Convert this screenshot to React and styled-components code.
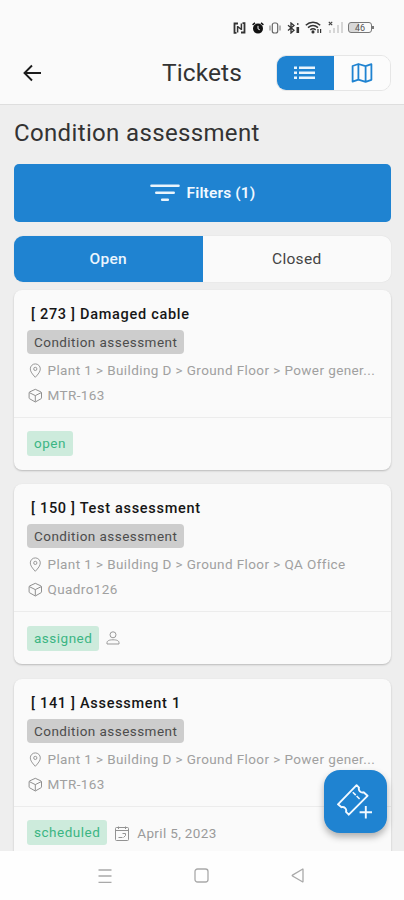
import styled, { createGlobalStyle, css } from "styled-components";

const tickets = [
  {
    id: 273,
    name: "Damaged cable",
    path: "Plant 1 > Building D > Ground Floor > Power gener...",
    asset: "MTR-163",
    status: "open",
  },
  {
    id: 150,
    name: "Test assessment",
    path: "Plant 1 > Building D > Ground Floor > QA Office",
    asset: "Quadro126",
    status: "assigned",
    assigned: true,
  },
  {
    id: 141,
    name: "Assessment 1",
    path: "Plant 1 > Building D > Ground Floor > Power gener...",
    asset: "MTR-163",
    status: "scheduled",
    date: "April 5, 2023",
  },
];

export default function App() {
  return (
    <Screen>
      <GlobalStyle />
      <StatusBar />
      <Header>
        <BackButton aria-label="Back">
          <BackIcon />
        </BackButton>
        <Title>Tickets</Title>
        <ViewSwitch>
          <ViewButton $active aria-label="List">
            <ListIcon />
          </ViewButton>
          <ViewButton aria-label="Map">
            <MapIcon />
          </ViewButton>
        </ViewSwitch>
      </Header>
      <Content>
        <Heading>Condition assessment</Heading>
        <FilterButton>
          <FilterIcon />
          Filters (1)
        </FilterButton>
        <Tabs>
          <Tab $active>Open</Tab>
          <Tab>Closed</Tab>
        </Tabs>
        <TicketList>
          {tickets.map((ticket) => (
            <TicketCard key={ticket.id} ticket={ticket} />
          ))}
        </TicketList>
      </Content>
      <AddButton aria-label="New ticket">
        <TicketPlusIcon />
      </AddButton>
      <NavBar />
    </Screen>
  );
}

const TicketCard = ({ ticket }) => {
  return (
    <Card>
      <CardBody>
        <CardTitle>
          <span>[ {ticket.id} ]</span> {ticket.name}
        </CardTitle>
        <Category>Condition assessment</Category>
        <Meta>
          <PinIcon />
          <span>{ticket.path}</span>
        </Meta>
        <Meta>
          <BoxIcon />
          <span>{ticket.asset}</span>
        </Meta>
      </CardBody>
      <CardFooter>
        <Status>{ticket.status}</Status>
        {ticket.assigned && <PersonIcon />}
        {ticket.date && (
          <DateLabel>
            <CalendarIcon />
            {ticket.date}
          </DateLabel>
        )}
      </CardFooter>
    </Card>
  );
};

const StatusBar = () => (
  <StatusRow>
    {/* nfc */}
    <svg width="13" height="12" viewBox="0 0 13 12" fill="none" stroke="#333" strokeWidth="1.8">
      <path d="M5 1.5H1.5v9.300H3.500M8 10.500h3.500V1.200H9.500" />
      <path d="M4.600 4v6.500M8.400 1.500v6.500M4.600 4.500l3.800 3" strokeWidth="1.500" />
    </svg>
    {/* alarm */}
    <svg width="12" height="12" viewBox="0 0 12 12">
      <circle cx="6" cy="6.6" r="5" fill="#111" />
      <path d="M.6 2.8 3 .8M11.4 2.8 9 .8" stroke="#111" strokeWidth="1.5" />
      <path d="M6 3.8v3l1.8 1" stroke="#fafafa" strokeWidth="1" fill="none" />
    </svg>
    {/* vibrate */}
    <svg width="12" height="12" viewBox="0 0 12 12" fill="none" stroke="#666">
      <rect x="3.3" y="1" width="5.4" height="10" rx="2" strokeWidth="1.2" />
      <path d="M1 3.5v5M11 3.5v5" strokeWidth=".9" />
    </svg>
    {/* bluetooth */}
    <svg width="13" height="12" viewBox="0 0 13 12" fill="none" stroke="#333">
      <path d="m1 3.3 6 5-3 2.7V1l3 2.6-6 5" strokeWidth="1.3" />
      <path d="M10.8 5v6" strokeWidth="2.6" />
      <path d="M10.8 1v2" strokeWidth="1.2" />
    </svg>
    {/* wifi */}
    <svg width="17" height="13" viewBox="0 0 17 13" fill="none" stroke="#333" strokeWidth="1.5">
      <path d="M.8 4.2C5 .2 11 .2 15.2 4.2M3 6.6c3-2.6 7-2.6 10 0M5.3 8.8c1.7-1.4 3.7-1.4 5.4 0" />
      <circle cx="8" cy="10.9" r=".8" fill="#333" />
      <path d="M13 8v4M15.6 8v4" strokeWidth="1.2" />
    </svg>
    {/* signal */}
    <svg width="16" height="13" viewBox="0 0 16 13" fill="none" stroke="#d2d2d2" strokeWidth="1.8">
      <path d="M2 12V9M6 12V7M10 12V4M14 12V1" />
      <path d="m.8.8 3.4 3.4M4.2.8.8 4.2" stroke="#444" strokeWidth="1.2" />
    </svg>
    <Battery>46</Battery>
  </StatusRow>
);

const NavBar = () => (
  <Nav>
    <svg width="14" height="16" viewBox="0 0 14 16" stroke="#a9a9a9" strokeWidth="1.3">
      <path d="M.5 2h13M.5 8h13M.5 14.3h13" />
    </svg>
    <svg width="15" height="15" viewBox="0 0 15 15" fill="none" stroke="#a9a9a9" strokeWidth="1.3">
      <rect x="1" y="1" width="13" height="13" rx="2.5" />
    </svg>
    <svg width="14" height="15" viewBox="0 0 14 15" fill="none" stroke="#a9a9a9" strokeWidth="1.3">
      <path d="M12 1.5v12q0 .6-.6.3L1.5 8q-.6-.5 0-.9L11.4 1.2q.6-.3.6.3z" />
    </svg>
  </Nav>
);

const BackIcon = () => (
  <svg width="20" height="18" viewBox="0 0 20 18" fill="none" stroke="#1c1c1c" strokeWidth="1.9">
    <path d="M19 9H2.5M10 1.5 2.5 9l7.5 7.5" />
  </svg>
);

const ListIcon = () => (
  <svg width="22" height="14" viewBox="0 0 22 14" fill="#e9f4fc">
    <path d="M0 .5h3v2.6H0zM5 .5h16v2.6H5zM0 5.5h3v2.6H0zM5 5.5h16v2.6H5zM0 10.5h3v2.6H0zM5 10.5h16v2.6H5z" />
  </svg>
);

const MapIcon = () => (
  <svg width="22" height="20" viewBox="0 0 22 20" fill="none" stroke="#1f83d1" strokeWidth="1.8" strokeLinejoin="round">
    <path d="m1.6 3 5.8-2 7.2 2.2 5.8-2v15.6l-5.8 2-7.2-2.2-5.8 2zM7.4 1v15.6M14.6 3.2v15.6" />
  </svg>
);

const FilterIcon = () => (
  <svg width="30" height="18" viewBox="0 0 30 18" stroke="#e9f4fc" strokeWidth="2.6" strokeLinecap="round">
    <path d="M1.5 1.8h27M6.3 8.8h17.4M12.2 15.8h5.6" />
  </svg>
);

const PinIcon = () => (
  <svg width="16" height="16" viewBox="0 0 16 16" fill="none" stroke="#999">
    <path d="M8.3 15.3c-3-3.200-5-5.800-5-8.400a5 5 0 0 1 10 0c0 2.600-2 5.200-5 8.400z" />
    <circle cx="8.3" cy="6.9" r="1.6" />
  </svg>
);

const BoxIcon = () => (
  <svg width="16" height="16" viewBox="0 0 16 16" fill="none" stroke="#8f8f8f" strokeLinejoin="round">
    <path d="m8.3 2.300 5.600 2.600q.6.300.6 1v5q0 .6-.6.900L8.300 15l-5.600-3.200q-.6-.300-.6-.900v-5q0-.7.6-1zM2.300 5.600l6 3 6-3M8.300 8.600v6" />
  </svg>
);

const PersonIcon = () => (
  <svg width="14" height="16" viewBox="0 0 14 16" fill="none" stroke="#999">
    <circle cx="7" cy="4.8" r="3" />
    <path d="M1 14v-1.2C1 10.8 3 9.8 7 9.8s6 1 6 3V14z" />
  </svg>
);

const CalendarIcon = () => (
  <svg width="16" height="16" viewBox="0 0 16 16" fill="none" stroke="#929292">
    <rect x="1.5" y="2.5" width="13" height="13" rx="1" />
    <path d="M1.5 5.500h13M4.500 1.500v2.500M11.500 1.500v2.500M8.500 8.500h3v2l-2 2M4.500 12.500h4" />
  </svg>
);

const TicketPlusIcon = () => (
  <svg width="38" height="36" viewBox="0 0 38 36" fill="none" stroke="#f2f9ff" strokeWidth="1.9" strokeLinejoin="round">
    <path d="M1 20.300 19.600 1.200l2.400 2.400c-.9 2.800 1.700 5.500 4.600 4.700l3.900 3.500L11.800 30.700 9 27.900c1-2.800-1.700-5.500-4.500-4.700z" />
    <path d="m15.800 8.200 7.500 7.500" strokeWidth="1.6" strokeDasharray="4.200 1.200" />
    <path d="M28.800 22v12.400M22.600 28.200H35" />
  </svg>
);

const GlobalStyle = createGlobalStyle`
  * {
    box-sizing: border-box;
  }
  body {
    margin: 0;
    background: #eeeeee;
    font-family: Roboto, "Liberation Sans", sans-serif;
  }
  button {
    font-family: inherit;
    border: none;
    padding: 0;
  }
  svg {
    flex-shrink: 0;
    display: block;
  }
`;

const Screen = styled.div`
  position: relative;
  display: flex;
  flex-direction: column;
  width: 404px;
  height: 900px;
  overflow: hidden;
  background: #eeeeee;
`;

const StatusRow = styled.div`
  flex: none;
  display: flex;
  align-items: center;
  justify-content: flex-end;
  gap: 5.5px;
  height: 42px;
  padding: 13px 29px 0 0;
  background: #fafafa;
`;

const Battery = styled.div`
  position: relative;
  width: 24px;
  height: 11px;
  margin: 0 3px 0 -1px;
  border: 1px solid #777;
  border-radius: 3px;
  background: linear-gradient(90deg, #d8d8d8 45%, #fafafa 45%);
  color: #555;
  font-size: 9px;
  line-height: 10px;
  text-align: center;
  &:after {
    content: "";
    position: absolute;
    right: -3px;
    top: 3px;
    width: 2px;
    height: 3px;
    background: #777;
  }
`;

const Header = styled.header`
  flex: none;
  display: flex;
  align-items: center;
  height: 63px;
  padding: 0 13px 0 22px;
  background: #fafafa;
  border-bottom: 1px solid #dedede;
`;

const BackButton = styled.button`
  background: none;
`;

const Title = styled.h1`
  flex: 1;
  margin: -2px 0 0 120px;
  font-size: 24.5px;
  font-weight: 400;
  letter-spacing: 0.1px;
  color: #333;
`;

const ViewSwitch = styled.div`
  display: flex;
  width: 115px;
  height: 36px;
  border: 1px solid #e6e6e6;
  border-radius: 10px;
  overflow: hidden;
`;

const ViewButton = styled.button`
  flex: 1;
  display: flex;
  align-items: center;
  justify-content: center;
  background: ${(props) => (props.$active ? "#1f83d1" : "#fcfcfc")};
`;

const Content = styled.main`
  flex: 1;
  min-height: 0;
  overflow: hidden;
  padding: 0 13px 0 14px;
`;

const Heading = styled.h2`
  margin: 0;
  height: 58.5px;
  line-height: 57px;
  font-size: 24px;
  font-weight: 400;
  letter-spacing: 0.35px;
  color: #333;
  white-space: nowrap;
`;

const FilterButton = styled.button`
  display: flex;
  align-items: center;
  justify-content: center;
  gap: 7px;
  width: 100%;
  height: 58px;
  border-radius: 5px;
  background: #1f83d1;
  color: #f0f8ff;
  font-size: 15.5px;
  font-weight: 600;
  letter-spacing: 0.15px;
`;

const Tabs = styled.div`
  display: flex;
  height: 46px;
  margin-top: 14px;
  border-radius: 9px;
  overflow: hidden;
  box-shadow: 0 0 1px #c8c8c8;
`;

const Tab = styled.button`
  flex: 1;
  background: #fafafa;
  color: #444;
  font-size: 15.5px;
  font-weight: 400;
  letter-spacing: 0.3px;
  ${(props) =>
    props.$active &&
    css`
      background: #1f83d1;
      color: #eaf5fd;
      font-weight: 500;
    `}
`;

const TicketList = styled.div`
  display: grid;
  grid-template-columns: minmax(0, 1fr);
  gap: 14.6px;
  margin-top: 8px;
`;

const Card = styled.article`
  height: 180px;
  border-radius: 8px;
  background: #fafafa;
  box-shadow: 0 1px 2px rgba(0, 0, 0, 0.22);
`;

const CardBody = styled.div`
  display: flex;
  flex-direction: column;
  align-items: flex-start;
  height: 128px;
  padding: 13px 13px 0;
  border-bottom: 1px solid #ececec;
`;

const CardTitle = styled.h3`
  margin: 0 0 0 4px;
  height: 27px;
  line-height: 23px;
  font-size: 14.5px;
  font-weight: 500;
  letter-spacing: 0.7px;
  color: #161616;
  white-space: nowrap;
`;

const Category = styled.div`
  height: 24px;
  padding: 0 7px;
  margin-bottom: 3.5px;
  border-radius: 4px;
  background: #cdcdcd;
  color: #4c4c4c;
  font-size: 13.5px;
  line-height: 24px;
  letter-spacing: 0.45px;
  white-space: nowrap;
`;

const Meta = styled.div`
  display: flex;
  align-items: center;
  gap: 4.5px;
  height: 25px;
  color: #a0a0a0;
  font-size: 13.5px;
  letter-spacing: 0.4px;
  white-space: nowrap;
`;

const CardFooter = styled.div`
  display: flex;
  align-items: center;
  gap: 7px;
  height: 52px;
  padding: 0 13px;
`;

const Status = styled.span`
  height: 25px;
  padding: 0 7px;
  border-radius: 3px;
  background: #cdebdc;
  color: #3bb583;
  font-size: 13.5px;
  line-height: 25px;
  letter-spacing: 0.5px;
`;

const DateLabel = styled.span`
  display: flex;
  align-items: center;
  gap: 7px;
  color: #9a9a9a;
  font-size: 13.5px;
  letter-spacing: 0.35px;
`;

const AddButton = styled.button`
  position: absolute;
  right: 17px;
  bottom: 67px;
  display: flex;
  align-items: center;
  justify-content: center;
  width: 63px;
  height: 63px;
  border-radius: 16px;
  background: #1f83d1;
  box-shadow: 0 4px 7px rgba(0, 0, 0, 0.3);
`;

const Nav = styled.nav`
  flex: none;
  display: flex;
  align-items: center;
  justify-content: space-between;
  height: 49px;
  padding: 0 99px 0 98px;
  background: #fefefe;
`;
